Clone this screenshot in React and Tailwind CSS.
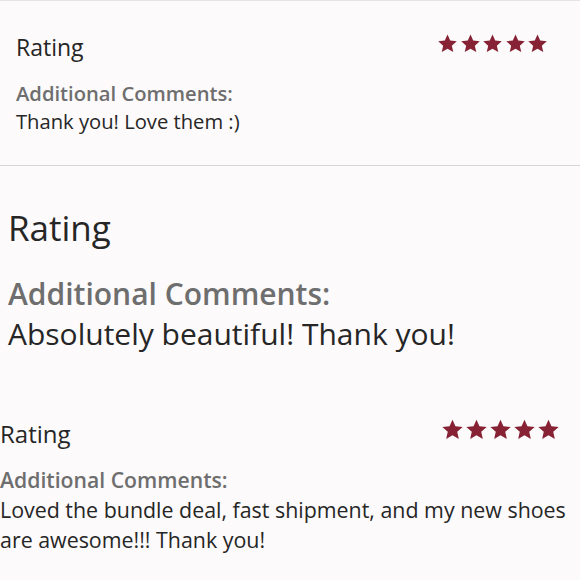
import React from "react";

const Star = ({ size }) => (
  <svg width={size} height={size} viewBox="0 0 24 24" fill="#862234">
    <path d="M12 1.8l3.09 6.9 7.51.74-5.65 5.02 1.63 7.38L12 18.04l-6.58 3.8 1.63-7.38L1.4 9.44l7.51-.74z" />
  </svg>
);

const Stars = ({ size, gap }) => (
  <div className={`flex ${gap}`}>
    {[0, 1, 2, 3, 4].map((i) => (
      <Star key={i} size={size} />
    ))}
  </div>
);

export default function App() {
  return (
    <div
      className="w-[580px] h-[580px] overflow-hidden bg-[#fcfafb] text-[#262626]"
      style={{ fontFamily: "'Open Sans', Lato, sans-serif" }}
    >
      {/* Section 1 */}
      <div className="h-[166px] border-t border-[#e6e4e4] border-b-[1.5px] border-b-[#d6d4d4] pl-4 pt-[28px]">
        <div className="flex justify-between items-start">
          <div className="text-[23px] leading-[36px]">Rating</div>
          <div className="mt-[4px] mr-8">
            <Stars size={21} gap="gap-[1.5px]" />
          </div>
        </div>
        <div className="mt-[14px] text-[20.2px] leading-[28px] font-semibold text-[#6e6e6e]">Additional Comments:</div>
        <div className="text-[20.2px] leading-[28px]">Thank you! Love them :)</div>
      </div>

      {/* Section 2 */}
      <div className="h-[214px] pl-2 pt-[38px]">
        <div className="text-[35px] leading-[48px]">Rating</div>
        <div className="mt-[22px] text-[30px] leading-[40px] font-semibold text-[#6e6e6e]">Additional Comments:</div>
        <div className="text-[30px] leading-[40px]">Absolutely beautiful! Thank you!</div>
      </div>

      {/* Section 3 */}
      <div className="pt-[34px]">
        <div className="flex justify-between items-start">
          <div className="text-[24px] leading-[40px]">Rating</div>
          <div className="mt-[4px] mr-[20px]">
            <Stars size={23} gap="gap-[1px]" />
          </div>
        </div>
        <div className="mt-[11px] text-[21.2px] leading-[30px] font-semibold text-[#6e6e6e]">Additional Comments:</div>
        <div className="text-[21.4px] leading-[30px]">
          Loved the bundle deal, fast shipment, and my new shoes are awesome!!! Thank you!
        </div>
      </div>
    </div>
  );
}
